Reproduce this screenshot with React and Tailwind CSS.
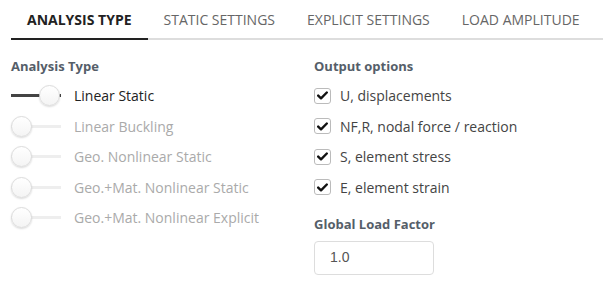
import React from "react";

const tabs = ["ANALYSIS TYPE", "STATIC SETTINGS", "EXPLICIT SETTINGS", "LOAD AMPLITUDE"];
const types = [
  "Linear Static",
  "Linear Buckling",
  "Geo. Nonlinear Static",
  "Geo.+Mat. Nonlinear Static",
  "Geo.+Mat. Nonlinear Explicit",
];
const outputs = ["U, displacements", "NF,R, nodal force / reaction", "S, element stress", "E, element strain"];

function Switch({ on }) {
  return (
    <div className="relative w-[50px] h-[21px] flex items-center">
      <div className={on ? "w-full h-[3px] bg-[#444]" : "w-full h-[3px] bg-[#eeeeee]"} />
      <div
        className={
          "absolute top-0 w-[21px] h-[21px] rounded-full bg-gradient-to-b from-white to-[#f4f4f4] border border-[#dcdcdc] shadow-[0_1px_2px_rgba(0,0,0,0.15)] " +
          (on ? "left-[28px]" : "left-0")
        }
      />
    </div>
  );
}

function Check() {
  return (
    <div className="w-[17px] h-[16px] rounded-[3px] border border-[#bbbbbb] bg-white flex items-center justify-center">
      <svg width="11" height="9" viewBox="0 0 11 9">
        <path d="M1.2 4.6 L4 7.3 L9.8 1.5" fill="none" stroke="#111" strokeWidth="2.4" strokeLinecap="round" strokeLinejoin="round" />
      </svg>
    </div>
  );
}

export default function App() {
  return (
    <div className="w-[607px] h-[293px] bg-white pl-[11px] font-['Open_Sans',sans-serif]">
      <div className="flex w-[592px] border-b-2 border-[#dddddd] h-[40px]">
        {tabs.map((t, i) => (
          <div
            key={t}
            className={
              "h-[40px] -mb-[2px] px-4 pt-[1px] flex items-center text-[14px] " +
              (i === 0 ? "border-b-2 border-[#222] font-bold text-[#222]" : "text-[#666] border-b-2 border-transparent")
            }
          >
            {t}
          </div>
        ))}
      </div>
      <div className="flex mt-[16px]">
        <div className="w-[303px]">
          <div className="text-[13px] font-bold text-[#555e69] leading-[20px]">Analysis Type</div>
          <div className="mt-[9px] flex flex-col gap-[9.5px]">
            {types.map((t, i) => (
              <div key={t} className="flex items-center h-[21px]">
                <Switch on={i === 0} />
                <span className={"ml-[13px] text-[14px] " + (i === 0 ? "text-[#222]" : "text-[#aaaaaa]")}>{t}</span>
              </div>
            ))}
          </div>
        </div>
        <div className="flex-1">
          <div className="text-[13px] font-bold text-[#555e69] leading-[20px]">Output options</div>
          <div className="mt-[9px] flex flex-col gap-[9.5px]">
            {outputs.map((t) => (
              <div key={t} className="flex items-center h-[21px]">
                <Check />
                <span className="ml-[9px] text-[14px] text-[#444]">{t}</span>
              </div>
            ))}
          </div>
          <div className="mt-[16px] text-[13px] font-bold text-[#555e69] leading-[20px]">Global Load Factor</div>
          <div className="mt-[7px] w-[120px] h-[34px] border border-[#dddddd] rounded-[4px] flex items-center pl-[15px] text-[14px] text-[#555] font-['Liberation_Sans',sans-serif]">
            1.0
          </div>
        </div>
      </div>
    </div>
  );
}
